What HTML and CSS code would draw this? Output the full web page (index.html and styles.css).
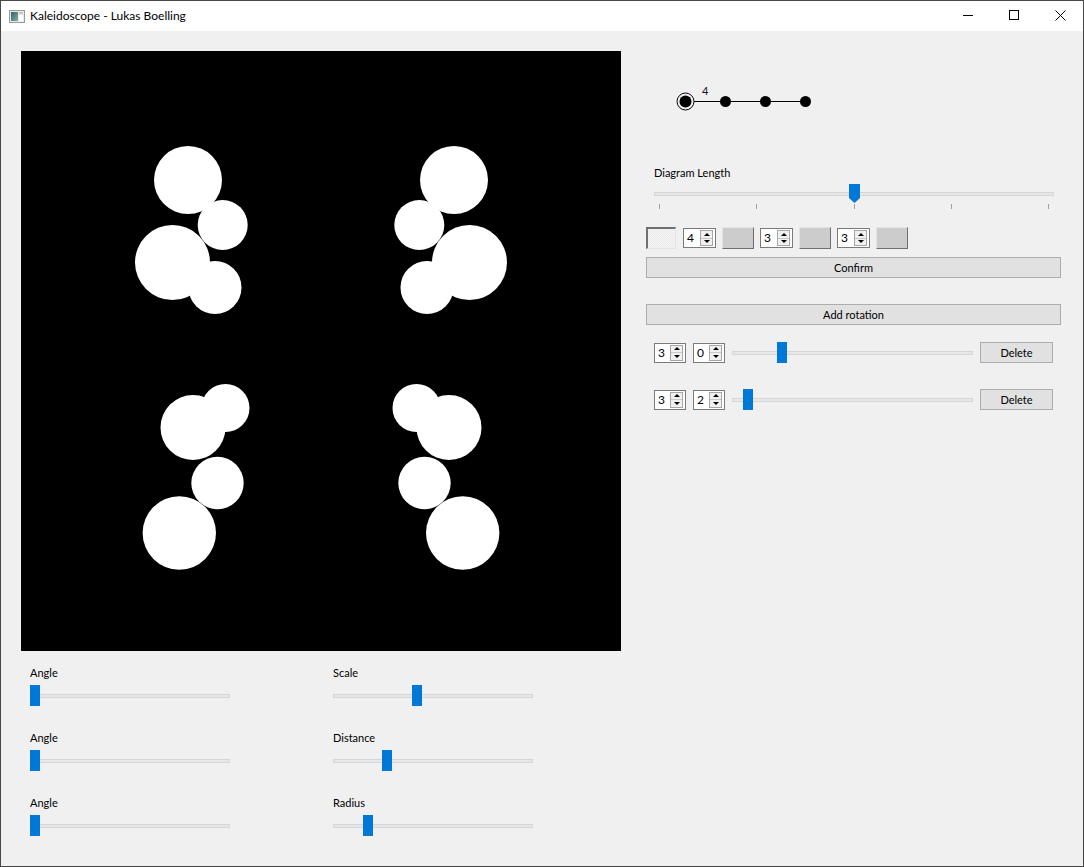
FILE: index.html
```html
<!DOCTYPE html>
<html>
<head>
<meta charset="utf-8">
<title>Kaleidoscope - Lukas Boelling</title>
<link rel="stylesheet" href="styles.css">
</head>
<body>
<div class="window">
  <div class="titlebar">
    <svg class="app-icon" width="16" height="13" viewBox="0 0 16 13">
      <defs>
        <linearGradient id="ig" x1="0" y1="0" x2="1" y2="1">
          <stop offset="0" stop-color="#2f5f6a"/>
          <stop offset="1" stop-color="#7fb39a"/>
        </linearGradient>
      </defs>
      <rect x="0.5" y="0.5" width="15" height="12" fill="#e8e8e8" stroke="#9a9a9a"/>
      <rect x="2" y="2" width="7" height="9" fill="url(#ig)"/>
      <rect x="10" y="2" width="4" height="2" fill="#c8c8c8"/>
      <rect x="10" y="5" width="4" height="6" fill="#ffffff"/>
    </svg>
    <span class="title">Kaleidoscope - Lukas Boelling</span>
    <div class="controls">
      <div class="ctl"><svg width="10" height="10" viewBox="0 0 10 10"><line x1="0" y1="5.5" x2="10" y2="5.5" stroke="#000" stroke-width="1"/></svg></div>
      <div class="ctl"><svg width="10" height="10" viewBox="0 0 10 10"><rect x="0.5" y="0.5" width="9" height="9" fill="none" stroke="#000" stroke-width="1"/></svg></div>
      <div class="ctl"><svg width="11" height="11" viewBox="0 0 11 11"><path d="M0.5 0.5L10.5 10.5M10.5 0.5L0.5 10.5" stroke="#000" stroke-width="1" fill="none"/></svg></div>
    </div>
  </div>

  <div class="client">
    <div class="left">
      <div class="canvas">
        <svg width="600" height="600" viewBox="0 0 600 600">
          <g fill="#fff">
            <circle cx="167" cy="129" r="34"/>
            <circle cx="201.7" cy="174" r="25"/>
            <circle cx="151.5" cy="211.5" r="37.5"/>
            <circle cx="194" cy="236.5" r="26.5"/>

            <circle cx="433" cy="129" r="34"/>
            <circle cx="398.3" cy="174" r="25"/>
            <circle cx="448.5" cy="211.5" r="37.5"/>
            <circle cx="406" cy="236.5" r="26.5"/>

            <circle cx="395.5" cy="357" r="24"/>
            <circle cx="428" cy="376.5" r="32.5"/>
            <circle cx="403.5" cy="432" r="26.2"/>
            <circle cx="441.7" cy="482" r="36.7"/>

            <circle cx="204.5" cy="357" r="24"/>
            <circle cx="172" cy="376.5" r="32.5"/>
            <circle cx="196.5" cy="432" r="26.2"/>
            <circle cx="158.3" cy="482" r="36.7"/>
          </g>
        </svg>
      </div>

      <div class="sliders">
        <div class="sblock">
          <div class="lbl">Angle</div>
          <div class="hslider"><div class="groove"></div><div class="handle" style="left:0px"></div></div>
        </div>
        <div class="sblock">
          <div class="lbl">Scale</div>
          <div class="hslider"><div class="groove"></div><div class="handle" style="left:79px"></div></div>
        </div>
        <div class="sblock">
          <div class="lbl">Angle</div>
          <div class="hslider"><div class="groove"></div><div class="handle" style="left:0px"></div></div>
        </div>
        <div class="sblock">
          <div class="lbl">Distance</div>
          <div class="hslider"><div class="groove"></div><div class="handle" style="left:49px"></div></div>
        </div>
        <div class="sblock">
          <div class="lbl">Angle</div>
          <div class="hslider"><div class="groove"></div><div class="handle" style="left:0px"></div></div>
        </div>
        <div class="sblock">
          <div class="lbl">Radius</div>
          <div class="hslider"><div class="groove"></div><div class="handle" style="left:30px"></div></div>
        </div>
      </div>
    </div>

    <div class="right">
      <svg class="diagram" width="160" height="40" viewBox="0 0 160 40">
        <line x1="34" y1="20.5" x2="145.5" y2="20.5" stroke="#000" stroke-width="1"/>
        <circle cx="25.5" cy="20.5" r="8.5" fill="none" stroke="#000" stroke-width="1"/>
        <circle cx="25.5" cy="20.5" r="6" fill="#000"/>
        <circle cx="65.5" cy="20.5" r="5.5" fill="#000"/>
        <circle cx="105.5" cy="20.5" r="5.5" fill="#000"/>
        <circle cx="145.5" cy="20.5" r="5.5" fill="#000"/>
        <text class="dlabel" x="42" y="14">4</text>
      </svg>

      <div class="dl-label">Diagram Length</div>
      <div class="dl-slider">
        <div class="groove"></div>
        <div class="handle-arrow" style="left:195px"></div>
      </div>
      <div class="ticks"><i></i><i></i><i></i><i></i><i></i></div>

      <div class="boxrow">
        <div class="tbox checked"></div>
        <div class="spin w33"><span class="val">4</span><span class="arrows"><b class="up"></b><b class="down"></b></span></div>
        <div class="tbox"></div>
        <div class="spin w33"><span class="val">3</span><span class="arrows"><b class="up"></b><b class="down"></b></span></div>
        <div class="tbox"></div>
        <div class="spin w33"><span class="val">3</span><span class="arrows"><b class="up"></b><b class="down"></b></span></div>
        <div class="tbox"></div>
      </div>

      <div class="btn wide confirm">Confirm</div>
      <div class="btn wide addrot">Add rotation</div>

      <div class="rotrow first">
        <div class="spin w32"><span class="val">3</span><span class="arrows"><b class="up"></b><b class="down"></b></span></div>
        <div class="spin w32"><span class="val">0</span><span class="arrows"><b class="up"></b><b class="down"></b></span></div>
        <div class="hslider rot"><div class="groove"></div><div class="handle" style="left:45px"></div></div>
        <div class="btn del">Delete</div>
      </div>
      <div class="rotrow second">
        <div class="spin w32"><span class="val">3</span><span class="arrows"><b class="up"></b><b class="down"></b></span></div>
        <div class="spin w32"><span class="val">2</span><span class="arrows"><b class="up"></b><b class="down"></b></span></div>
        <div class="hslider rot"><div class="groove"></div><div class="handle" style="left:11px"></div></div>
        <div class="btn del">Delete</div>
      </div>
    </div>
  </div>
</div>
</body>
</html>
```

FILE: styles.css
```css
* { box-sizing: border-box; }

html, body {
  margin: 0;
  padding: 0;
  background: #f0f0f0;
}

body {
  font-family: Lato, "Liberation Sans", sans-serif;
  font-size: 11px;
  color: #000;
}

.window {
  width: 1084px;
  height: 867px;
  border: 1px solid #474747;
  display: flex;
  flex-direction: column;
  background: #f0f0f0;
  overflow: hidden;
}

/* title bar */
.titlebar {
  height: 30px;
  background: #fff;
  display: flex;
  align-items: center;
  flex: none;
}

.app-icon {
  margin-left: 8px;
  margin-top: 1px;
  flex: none;
}

.title {
  margin-left: 5px;
  font-size: 12px;
  line-height: 16px;
}

.controls {
  margin-left: auto;
  display: flex;
  height: 30px;
}

.ctl {
  width: 46px;
  height: 30px;
  display: flex;
  justify-content: center;
  padding-top: 9px;
}

.ctl svg { display: block; }

/* client */
.client {
  flex: 1;
  display: flex;
  background: #f0f0f0;
}

.left {
  padding: 20px 0 0 20px;
  flex: none;
}

.canvas {
  width: 600px;
  height: 600px;
  background: #000;
}

.canvas svg { display: block; }

.sliders {
  margin: 15px 0 0 9px;
  display: grid;
  grid-template-columns: 200px 200px;
  column-gap: 103px;
}

.sblock {
  height: 65px;
}

.lbl {
  line-height: 13px;
  height: 16px;
}

.hslider {
  position: relative;
  height: 21px;
  margin-top: 3px;
  display: flex;
  align-items: center;
}

.groove {
  width: 100%;
  height: 4px;
  background: #e7e7e7;
  border: 1px solid #d6d6d6;
}

.handle {
  position: absolute;
  top: 0;
  width: 10px;
  height: 21px;
  background: #0078d7;
}

/* right panel */
.right {
  margin-left: 25px;
  width: 415px;
  flex: none;
  display: flex;
  flex-direction: column;
}

.diagram {
  display: block;
  margin: 50px 0 0 14px;
}

.dlabel {
  font-family: Lato, "Liberation Sans", sans-serif;
  font-size: 11px;
  fill: #101030;
}

.dl-label {
  margin: 44px 0 0 8px;
  line-height: 15px;
  height: 16px;
}

.dl-slider {
  position: relative;
  margin: 3px 0 0 8px;
  width: 400px;
  height: 19px;
  display: flex;
  align-items: flex-start;
}

.dl-slider .groove {
  margin-top: 8px;
}

.handle-arrow {
  position: absolute;
  top: 0;
  width: 11px;
  height: 19px;
  background: #0078d7;
  clip-path: polygon(0 0, 100% 0, 100% 14px, 50% 100%, 0 14px);
}

.ticks {
  margin: 1px 0 0 8px;
  width: 400px;
  height: 5px;
  padding: 0 5px;
  display: flex;
  justify-content: space-between;
}

.ticks i {
  display: block;
  width: 1px;
  height: 5px;
  background: #a0a0a0;
}

.boxrow {
  margin-top: 18px;
  height: 22px;
  display: flex;
  align-items: center;
}

.tbox {
  width: 32px;
  height: 22px;
  background: #cccccc;
  border: 1px solid;
  border-color: #e3e3e3 #6f6f6f #6f6f6f #e3e3e3;
  margin-left: 6px;
}

.tbox.checked {
  width: 30px;
  margin-left: 0;
  margin-right: 1px;
  border-width: 2px 1px 1px 2px;
  border-color: #6f6f6f #e3e3e3 #e3e3e3 #6f6f6f;
  background: repeating-conic-gradient(#e9e9e9 0 25%, #f7f7f7 0 50%) 0 0 / 2px 2px;
}

.spin {
  height: 20px;
  background: #fff;
  border: 1px solid #7a7a7a;
  display: flex;
  align-items: stretch;
  margin-left: 6px;
}

.spin.w33 { width: 33px; }
.spin.w32 { width: 32px; }

.val {
  flex: 1;
  padding-left: 3px;
  line-height: 18px;
  font-size: 12px;
}

.arrows {
  width: 13px;
  margin: 1px 2px 1px 0;
  border: 1px solid #a6a6a6;
  background: #f0f0f0;
  display: flex;
  flex-direction: column;
}

.arrows b {
  flex: 1;
  display: flex;
  align-items: center;
  justify-content: center;
}

.arrows b.down {
  border-top: 1px solid #c8c8c8;
}

.arrows b.up::after {
  content: "";
  border-left: 3px solid transparent;
  border-right: 3px solid transparent;
  border-bottom: 3px solid #000;
}

.arrows b.down::after {
  content: "";
  border-left: 3px solid transparent;
  border-right: 3px solid transparent;
  border-top: 3px solid #000;
}

.btn {
  background: #e1e1e1;
  border: 1px solid #adadad;
  display: flex;
  align-items: center;
  justify-content: center;
  height: 21px;
}

.btn.wide { width: 415px; }
.confirm { margin-top: 8px; }
.addrot { margin-top: 26px; }

.rotrow {
  display: flex;
  align-items: center;
  height: 21px;
  padding: 0 8px;
}

.rotrow.first { margin-top: 17px; }
.rotrow.second { margin-top: 26px; }

.rotrow .spin { margin-left: 7px; }
.rotrow .spin:first-child { margin-left: 0; }

.hslider.rot {
  margin: 0 0 0 7px;
  width: 241px;
}

.btn.del {
  margin-left: 7px;
  width: 73px;
  height: 21px;
}
```
